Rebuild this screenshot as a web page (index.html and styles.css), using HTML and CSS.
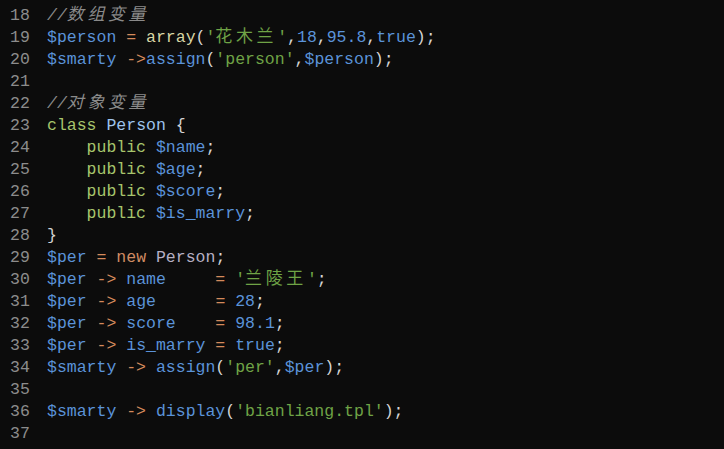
FILE: index.html
```html
<!DOCTYPE html>
<html>
<head>
<meta charset="utf-8">
<link rel="stylesheet" href="styles.css">
</head>
<body>
<div class="editor">
<div class="line"><span class="ln">18</span><span class="code"><span class="cm">//<span class="cj">数组变量</span></span></span></div>
<div class="line"><span class="ln">19</span><span class="code"><span class="v">$person</span> <span class="op">=</span> <span class="fn">array</span><span class="p">(</span><span class="s">'<span class="cj">花木兰</span>'</span><span class="p">,</span><span class="n">18</span><span class="p">,</span><span class="n">95.8</span><span class="p">,</span><span class="n">true</span><span class="p">);</span></span></div>
<div class="line"><span class="ln">20</span><span class="code"><span class="v">$smarty</span> <span class="op">-&gt;</span><span class="m">assign</span><span class="p">(</span><span class="s">'person'</span><span class="p">,</span><span class="v">$person</span><span class="p">);</span></span></div>
<div class="line"><span class="ln">21</span><span class="code"></span></div>
<div class="line"><span class="ln">22</span><span class="code"><span class="cm">//<span class="cj">对象变量</span></span></span></div>
<div class="line"><span class="ln">23</span><span class="code"><span class="kw">class</span> <span class="cls">Person</span> <span class="p">{</span></span></div>
<div class="line"><span class="ln">24</span><span class="code">    <span class="kw">public</span> <span class="v">$name</span><span class="p">;</span></span></div>
<div class="line"><span class="ln">25</span><span class="code">    <span class="kw">public</span> <span class="v">$age</span><span class="p">;</span></span></div>
<div class="line"><span class="ln">26</span><span class="code">    <span class="kw">public</span> <span class="v">$score</span><span class="p">;</span></span></div>
<div class="line"><span class="ln">27</span><span class="code">    <span class="kw">public</span> <span class="v">$is_marry</span><span class="p">;</span></span></div>
<div class="line"><span class="ln">28</span><span class="code"><span class="p">}</span></span></div>
<div class="line"><span class="ln">29</span><span class="code"><span class="v">$per</span> <span class="op">=</span> <span class="nw">new</span> <span class="cl2">Person</span><span class="p">;</span></span></div>
<div class="line"><span class="ln">30</span><span class="code"><span class="v">$per</span> <span class="op">-&gt;</span> <span class="m">name</span>     <span class="op">=</span> <span class="s">'<span class="cj">兰陵王</span>'</span><span class="p">;</span></span></div>
<div class="line"><span class="ln">31</span><span class="code"><span class="v">$per</span> <span class="op">-&gt;</span> <span class="m">age</span>      <span class="op">=</span> <span class="n">28</span><span class="p">;</span></span></div>
<div class="line"><span class="ln">32</span><span class="code"><span class="v">$per</span> <span class="op">-&gt;</span> <span class="m">score</span>    <span class="op">=</span> <span class="n">98.1</span><span class="p">;</span></span></div>
<div class="line"><span class="ln">33</span><span class="code"><span class="v">$per</span> <span class="op">-&gt;</span> <span class="m">is_marry</span> <span class="op">=</span> <span class="n">true</span><span class="p">;</span></span></div>
<div class="line"><span class="ln">34</span><span class="code"><span class="v">$smarty</span> <span class="op">-&gt;</span> <span class="m">assign</span><span class="p">(</span><span class="s">'per'</span><span class="p">,</span><span class="v">$per</span><span class="p">);</span></span></div>
<div class="line"><span class="ln">35</span><span class="code"></span></div>
<div class="line"><span class="ln">36</span><span class="code"><span class="v">$smarty</span> <span class="op">-&gt;</span> <span class="m">display</span><span class="p">(</span><span class="s">'bianliang.tpl'</span><span class="p">);</span></span></div>
<div class="line"><span class="ln">37</span><span class="code"></span></div>
<div class="line"><span class="ln">38</span><span class="code"></span></div>
</div>
</body>
</html>
```
FILE: styles.css
```css
html, body {
  margin: 0;
  padding: 0;
  background: #0c0c0c;
  height: 100%;
  overflow: hidden;
}
.editor {
  padding-top: 5px;
  font-family: "Liberation Mono", "DejaVu Sans Mono", "Noto Sans CJK SC", monospace;
  font-size: 16.5px;
  color: #d4d4d4;
}
.line {
  display: flex;
  height: 22px;
  line-height: 22px;
  white-space: pre;
}
.ln {
  width: 37px;
  padding-left: 10px;
  color: #8c8c8c;
  flex: none;
}
.code { flex: 1; }
.cj {
  font-family: "Noto Sans CJK SC", sans-serif;
  font-size: 17px;
  line-height: 0;
  letter-spacing: 3.6px;
}
.cm { color: #8a8a8a; font-style: italic; }
.v { color: #5b93d9; }
.op { color: #d48a5c; }
.fn { color: #d8d6a4; }
.p { color: #d4d4d4; }
.s { color: #6fa346; }
.n { color: #5b93d9; }
.m { color: #5b93d9; }
.kw { color: #a7c56c; }
.cls { color: #9ec3ec; }
.nw { color: #d08b63; }
.cl2 { color: #b6b0c4; }
```
